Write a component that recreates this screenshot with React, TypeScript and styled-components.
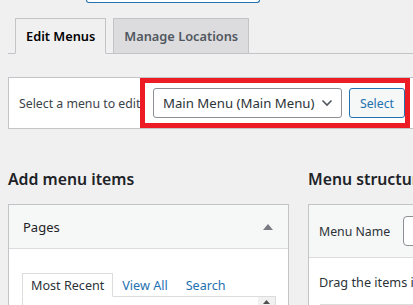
import React from 'react';
import styled, { createGlobalStyle } from 'styled-components';

const GlobalStyle = createGlobalStyle`
  html, body {
    margin: 0;
    padding: 0;
    background: #f0f0f1;
    overflow: hidden;
  }
  body {
    font-family: 'Noto Sans', 'Open Sans', sans-serif;
    color: #3c434a;
    font-size: 12.3px;
  }
`;

const Wrap = styled.div`
  width: 760px;
  padding-left: 8px;
`;

const SearchStub = styled.div`
  margin-left: 78px;
  width: 172px;
  height: 2px;
  background: #fff;
  border: 1px solid #2271b1;
  border-top: none;
  border-radius: 0 0 3px 3px;
`;

const NavTabs = styled.div`
  display: flex;
  margin-top: 15px;
  border-bottom: 1px solid #c3c4c7;
`;

const NavTab = styled.div<{ $active?: boolean }>`
  margin-left: 7px;
  margin-bottom: -1px;
  padding: 5px 10px;
  border: 1px solid #c3c4c7;
  border-bottom-color: ${(p) => (p.$active ? '#f0f0f1' : '#c3c4c7')};
  background: ${(p) => (p.$active ? '#f0f0f1' : '#dcdcde')};
  color: ${(p) => (p.$active ? '#000' : '#50575e')};
  font-size: 12.8px;
  line-height: 24px;
  font-weight: 600;
  white-space: nowrap;
`;

const ManagePanel = styled.div`
  position: relative;
  margin-top: 23px;
  padding: 10px;
  display: flex;
  align-items: center;
  background: #fff;
  border: 1px solid #c3c4c7;
`;

const PanelLabel = styled.span`
  font-size: 12.3px;
  color: #3c434a;
  white-space: nowrap;
  width: 134px;
`;

const SelectBox = styled.div`
  box-sizing: border-box;
  width: 189px;
  height: 30px;
  padding: 0 8px 0 9px;
  display: flex;
  align-items: center;
  justify-content: space-between;
  border: 1px solid #8c8f94;
  border-radius: 3px;
  background: #fff;
  color: #2c3338;
  font-size: 13.2px;
  white-space: nowrap;
`;

const Button = styled.div`
  box-sizing: border-box;
  margin-left: 7px;
  width: 56px;
  height: 30px;
  display: flex;
  align-items: center;
  justify-content: center;
  border: 1px solid #2271b1;
  border-radius: 3px;
  background: #f6f7f7;
  color: #2271b1;
  font-size: 12.3px;
`;

const OrText = styled.span`
  margin-left: 8px;
  white-space: nowrap;
  color: #3c434a;
`;

// annotation drawn on top of the screenshot
const Highlight = styled.div`
  position: absolute;
  left: 131px;
  top: 0;
  width: 270px;
  height: 50px;
  box-sizing: border-box;
  border: 5px solid #ed1c24;
  pointer-events: none;
`;

const Columns = styled.div`
  display: flex;
  align-items: flex-start;
  margin-top: 38px;
`;

const LeftCol = styled.div`
  width: 281px;
  flex-shrink: 0;
`;

const RightCol = styled.div`
  margin-left: 19px;
  width: 440px;
  flex-shrink: 0;
`;

const Heading = styled.h2`
  margin: 0 0 13px;
  height: 24px;
  font-size: 15.8px;
  line-height: 24px;
  font-weight: 600;
  color: #1d2327;
  white-space: nowrap;
`;

const Box = styled.div`
  box-sizing: border-box;
  border: 1px solid #c3c4c7;
  background: #fff;
`;

const BoxHeader = styled.div<{ $height: number }>`
  height: ${(p) => p.$height}px;
  display: flex;
  align-items: center;
  justify-content: space-between;
  background: #f6f7f7;
  border-bottom: 1px solid #dcdcde;
`;

const PagesTitle = styled.span`
  padding-left: 14px;
  font-size: 13px;
  color: #1d2327;
`;

const Toggle = styled.svg`
  margin-right: 15px;
`;

const PagesBody = styled.div`
  padding: 24px 12px 0 13px;
  height: 80px;
`;

const InnerTabs = styled.div`
  display: flex;
  align-items: flex-end;
  border-bottom: 1px solid #dcdcde;
`;

const InnerTab = styled.div<{ $active?: boolean }>`
  box-sizing: border-box;
  height: 24px;
  margin-bottom: -1px;
  padding: 0 8px;
  display: flex;
  align-items: center;
  font-size: 12.6px;
  white-space: nowrap;
  color: ${(p) => (p.$active ? '#2c3338' : '#2271b1')};
  background: ${(p) => (p.$active ? '#fff' : 'transparent')};
  border: 1px solid ${(p) => (p.$active ? '#dcdcde' : 'transparent')};
  border-bottom-color: ${(p) => (p.$active ? '#fff' : 'transparent')};
`;

const TabPanel = styled.div`
  display: flex;
  justify-content: flex-end;
  height: 40px;
  border: 1px solid #dcdcde;
  border-top: none;
`;

const ScrollTrack = styled.div`
  width: 17px;
  background: #f1f1f1;
  display: flex;
  justify-content: center;
  padding-top: 3px;
`;

const MenuNameLabel = styled.span`
  padding-left: 10px;
  font-size: 12.3px;
  color: #2c3338;
  white-space: nowrap;
`;

const NameInput = styled.div`
  box-sizing: border-box;
  margin-left: 13px;
  width: 220px;
  height: 30px;
  border: 1px solid #8c8f94;
  border-radius: 4px;
  background: #fff;
`;

const NameRow = styled.div`
  display: flex;
  align-items: center;
`;

const StructureBody = styled.div`
  padding: 15px 10px 0 10px;
`;

const Hint = styled.p`
  margin: 0;
  font-size: 12.7px;
  line-height: 18px;
  color: #2c3338;
  white-space: nowrap;
`;

const ItemSlot = styled.div`
  margin-top: 13px;
  margin-left: 1px;
  height: 30px;
  border: 1px solid #dcdcde;
`;

export default function App(): JSX.Element {
  return (
    <>
      <GlobalStyle />
      <Wrap>
        <SearchStub />

        <NavTabs>
          <NavTab $active>Edit Menus</NavTab>
          <NavTab>Manage Locations</NavTab>
        </NavTabs>

        <ManagePanel>
          <PanelLabel>Select a menu to edit:</PanelLabel>
          <SelectBox>
            Main Menu (Main Menu)
            <svg width='12' height='8' viewBox='0 0 12 8'>
              <path d='M1.5 1.5 L6 6 L10.5 1.5' fill='none' stroke='#50575e' strokeWidth='1.6' />
            </svg>
          </SelectBox>
          <Button>Select</Button>
          <OrText>or create a new menu.</OrText>
          <Highlight />
        </ManagePanel>

        <Columns>
          <LeftCol>
            <Heading>Add menu items</Heading>
            <Box>
              <BoxHeader $height={43}>
                <PagesTitle>Pages</PagesTitle>
                <Toggle width='10' height='6' viewBox='0 0 10 6'>
                  <path d='M0 6 L5 0 L10 6 Z' fill='#787c82' />
                </Toggle>
              </BoxHeader>
              <PagesBody>
                <InnerTabs>
                  <InnerTab $active>Most Recent</InnerTab>
                  <InnerTab>View All</InnerTab>
                  <InnerTab>Search</InnerTab>
                </InnerTabs>
                <TabPanel>
                  <ScrollTrack>
                    <svg width='7' height='4' viewBox='0 0 7 4'>
                      <path d='M0 4 L3.5 0 L7 4 Z' fill='#505050' />
                    </svg>
                  </ScrollTrack>
                </TabPanel>
              </PagesBody>
            </Box>
          </LeftCol>

          <RightCol>
            <Heading>Menu structure</Heading>
            <Box>
              <BoxHeader $height={52}>
                <NameRow>
                  <MenuNameLabel>Menu Name</MenuNameLabel>
                  <NameInput />
                </NameRow>
              </BoxHeader>
              <StructureBody>
                <Hint>Drag the items into the order you prefer.</Hint>
                <ItemSlot />
              </StructureBody>
            </Box>
          </RightCol>
        </Columns>
      </Wrap>
    </>
  );
}
